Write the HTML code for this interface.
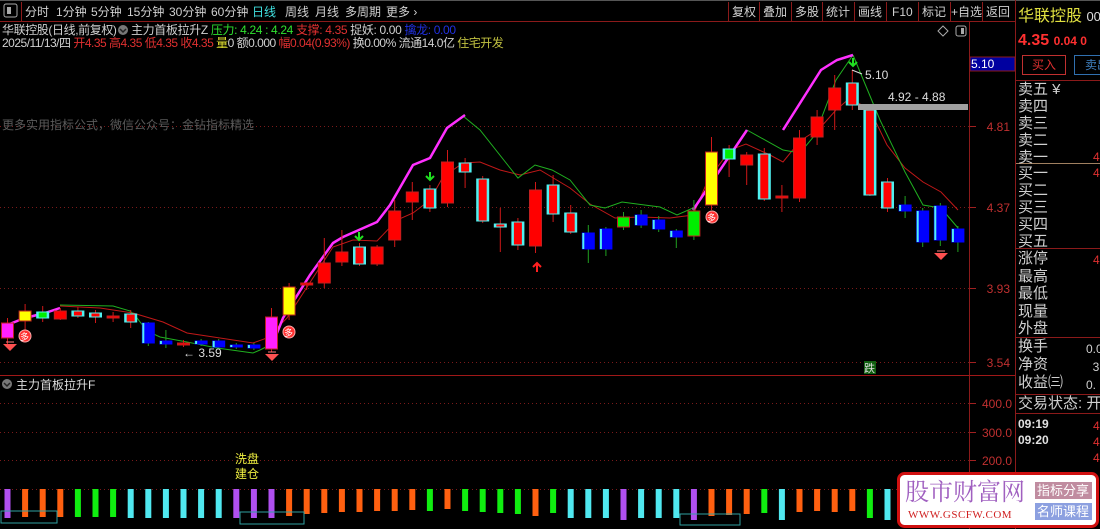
<!DOCTYPE html>
<html><head><meta charset="utf-8">
<style>
body{margin:0;background:#000;width:1100px;height:529px;overflow:hidden;font-family:"Liberation Sans","Noto Sans CJK SC",sans-serif;}
#root{position:relative;width:1100px;height:529px;overflow:hidden;background:#000;}
.t{position:absolute;white-space:nowrap;font-size:12px;line-height:14px;}
</style></head><body><div id="root">
<svg id="s" width="1100" height="529" style="position:absolute;left:0;top:0" xmlns="http://www.w3.org/2000/svg" font-family="Liberation Sans, Noto Sans CJK SC, sans-serif">
<rect x="0" y="0" width="1100" height="21" fill="#000"/>
<line x1="0" y1="21.5" x2="1015" y2="21.5" stroke="#8b1a1a"/>
<line x1="0" y1="0.5" x2="1100" y2="0.5" stroke="#555"/>
<rect x="4" y="4" width="13" height="13" fill="none" stroke="#aaa" rx="2"/><rect x="7" y="7" width="4" height="7" fill="#aaa"/>
<line x1="21.5" y1="2" x2="21.5" y2="21" stroke="#8b1a1a"/>
<g font-size="12" fill="#d0d0d0">
<text x="25" y="16">分时</text><text x="56" y="16">1分钟</text><text x="91" y="16">5分钟</text><text x="127" y="16">15分钟</text><text x="169" y="16">30分钟</text><text x="211" y="16">60分钟</text><text x="252" y="16" fill="#40e0e0">日线</text><text x="285" y="16">周线</text><text x="315" y="16">月线</text><text x="345" y="16">多周期</text><text x="386" y="16">更多 ›</text>
<text x="732" y="16">复权</text><text x="763" y="16">叠加</text><text x="795" y="16">多股</text><text x="826" y="16">统计</text><text x="858" y="16">画线</text><text x="892" y="16">F10</text><text x="922" y="16">标记</text><text x="951" y="16">+自选</text><text x="986" y="16">返回</text>
</g>
<g stroke="#8b1a1a"><line x1="728.5" y1="2" x2="728.5" y2="21"/><line x1="759.5" y1="2" x2="759.5" y2="21"/><line x1="791.5" y1="2" x2="791.5" y2="21"/><line x1="822.5" y1="2" x2="822.5" y2="21"/><line x1="854.5" y1="2" x2="854.5" y2="21"/><line x1="886.5" y1="2" x2="886.5" y2="21"/><line x1="918.5" y1="2" x2="918.5" y2="21"/><line x1="950.5" y1="2" x2="950.5" y2="21"/><line x1="982.5" y1="2" x2="982.5" y2="21"/></g>
<line x1="969.5" y1="22" x2="969.5" y2="529" stroke="#8b1a1a"/>
<line x1="1015.5" y1="0" x2="1015.5" y2="529" stroke="#8b1a1a"/>
<line x1="0" y1="375.5" x2="1015" y2="375.5" stroke="#a01818"/>
<g stroke="#7a1a1a" stroke-dasharray="1,3">
<line x1="0" y1="126.5" x2="969" y2="126.5"/><line x1="0" y1="207.5" x2="969" y2="207.5"/><line x1="0" y1="288.5" x2="969" y2="288.5"/><line x1="0" y1="362.5" x2="969" y2="362.5"/>
<line x1="0" y1="403.5" x2="969" y2="403.5"/><line x1="0" y1="432.5" x2="969" y2="432.5"/><line x1="0" y1="460.5" x2="969" y2="460.5"/><line x1="0" y1="489.5" x2="969" y2="489.5"/>
</g>
<g stroke="#a02020"><line x1="970" y1="126.5" x2="976" y2="126.5"/><line x1="970" y1="207.5" x2="976" y2="207.5"/><line x1="970" y1="288.5" x2="976" y2="288.5"/><line x1="970" y1="362.5" x2="976" y2="362.5"/><line x1="970" y1="403.5" x2="976" y2="403.5"/><line x1="970" y1="432.5" x2="976" y2="432.5"/><line x1="970" y1="460.5" x2="976" y2="460.5"/></g>
<g font-size="12" fill="#c03030" text-anchor="end"><text x="1010" y="131">4.81</text><text x="1010" y="212">4.37</text><text x="1010" y="293">3.93</text><text x="1010" y="367">3.54</text><text x="1012" y="408">400.0</text><text x="1012" y="437">300.0</text><text x="1012" y="465">200.0</text></g>
<rect x="970" y="57" width="45" height="14" fill="#0000a0" stroke="#8b1a1a"/><text x="971" y="68" font-size="12" fill="#fff">5.10</text>
<path d="M943 26 L948 31 L943 36 L938 31 Z" fill="none" stroke="#aaa"/>
<rect x="956" y="26" width="10" height="10" rx="2" fill="none" stroke="#aaa"/><rect x="961" y="28" width="3" height="6" fill="#aaa"/>
<circle cx="123" cy="30" r="5" fill="#777"/><path d="M120 29 L123 32 L126 29" stroke="#222" fill="none" stroke-width="1.5"/>
<circle cx="7" cy="384" r="5" fill="#777"/><path d="M4 383 L7 386 L10 383" stroke="#222" fill="none" stroke-width="1.5"/>
<text x="2" y="129" font-size="12" fill="#5a5a5a">更多实用指标公式，微信公众号：金钻指标精选</text>
<g id="chart"></g>
<rect x="858" y="104" width="110" height="6" fill="#a0a0a0"/>
<text x="888" y="101" font-size="12" fill="#ddd">4.92 - 4.88</text>
<text x="865" y="79" font-size="12" fill="#ddd">5.10</text><path d="M852 70 L862 74" stroke="#ddd"/>
<text x="183" y="357" font-size="12" fill="#ddd">← 3.59</text>
<rect x="864" y="361" width="12" height="13" fill="#106010"/><text x="864" y="372" font-size="11" fill="#ddd">跌</text>
<text x="16" y="389" font-size="12" fill="#ddd">主力首板拉升F</text>
<text x="235" y="463" font-size="12" fill="#f0f040">洗盘</text><text x="235" y="478" font-size="12" fill="#f0f040">建仓</text>
<g id="bars"></g>
<rect x="1" y="511" width="56" height="12" fill="none" stroke="#30a0a0"/>
<rect x="240" y="512" width="64" height="12" fill="none" stroke="#30a0a0"/>
<rect x="680" y="514" width="60" height="11" fill="none" stroke="#30a0a0"/>
<rect x="898.5" y="473.5" width="199" height="53" rx="6" fill="#fff" stroke="#d01010" stroke-width="3"/>
<text x="905" y="500" font-size="24" fill="#a060c0" font-family="Noto Serif CJK SC, serif">股市财富网</text>
<text x="908" y="518" font-size="11" fill="#d02020" font-family="Liberation Serif, serif" letter-spacing="0.5">WWW.GSCFW.COM</text>
<rect x="1035" y="482" width="57" height="17" fill="#c08ca0"/><text x="1037" y="495" font-size="13" fill="#fff">指标分享</text>
<rect x="1035" y="503" width="57" height="17" fill="#8ca0e0"/><text x="1037" y="516" font-size="13" fill="#fff">名师课程</text>
</svg>
<div class="t" style="left:2px;top:23px;color:#d0d0d0;letter-spacing:-0.4px">华联控股(日线,前复权)</div>
<div class="t" style="left:131px;top:23px;color:#d0d0d0;letter-spacing:-0.35px">主力首板拉升Z <span style="color:#30e030">压力: 4.24 : 4.24</span> <span style="color:#e03030">支撑: 4.35</span> 捉妖: 0.00 <span style="color:#2030e0">擒龙: 0.00</span></div>
<div class="t" style="left:2px;top:36px;color:#d0d0d0;letter-spacing:-0.5px">2025/11/13/四 <span style="color:#e03030">开4.35 高4.35 低4.35 收4.35</span> <span style="color:#e0e030">量</span>0 额0.000 <span style="color:#e03030">幅0.04(0.93%)</span> 换0.00% 流通14.0亿 <span style="color:#c0c040">住宅开发</span></div>
<div class="t" style="left:1018px;top:7px;font-size:16px;line-height:20px;color:#e0e040">华联控股 <span style="font-size:13px;color:#ddd">000</span></div>
<div class="t" style="left:1018px;top:31px;font-size:16px;line-height:20px;color:#ff3030;font-weight:bold">4.35 <span style="font-size:12px">0.04 0</span></div>
<div style="position:absolute;left:1022px;top:55px;width:42px;height:18px;border:1px solid #c03030;color:#e03030;font-size:12px;text-align:center;line-height:18px">买入</div>
<div style="position:absolute;left:1074px;top:55px;width:40px;height:18px;border:1px solid #3070b0;color:#4080c0;font-size:12px;line-height:18px;padding-left:10px">卖出</div>
<svg width="85" height="529" style="position:absolute;left:1016px;top:0">
<line x1="0" y1="80.5" x2="85" y2="80.5" stroke="#8b1a1a"/>
<line x1="0" y1="163.5" x2="85" y2="163.5" stroke="#a08060"/>
<line x1="0" y1="248.5" x2="85" y2="248.5" stroke="#8b1a1a"/>
<line x1="0" y1="337.5" x2="85" y2="337.5" stroke="#8b1a1a"/>
<line x1="0" y1="394.5" x2="85" y2="394.5" stroke="#8b1a1a"/>
<line x1="0" y1="413.5" x2="85" y2="413.5" stroke="#8b1a1a"/>
</svg>
<div class="t" style="left:1018px;top:81px;font-size:15px;line-height:17px;color:#d0d0d0">卖五 ¥<br>卖四<br>卖三<br>卖二<br>卖一</div>
<div class="t" style="left:1018px;top:165px;font-size:15px;line-height:17px;color:#d0d0d0">买一<br>买二<br>买三<br>买四<br>买五</div>
<div class="t" style="left:1018px;top:250px;font-size:15px;line-height:17.5px;color:#d0d0d0">涨停<br>最高<br>最低<br>现量<br>外盘</div>
<div class="t" style="left:1018px;top:338px;font-size:15px;line-height:18px;color:#d0d0d0">换手<br>净资<br>收益㈢</div>
<div class="t" style="left:1086px;top:340px;font-size:12px;line-height:18px;color:#d0d0d0">0.0<br>&nbsp;&nbsp;3<br>0.</div>
<div class="t" style="left:1018px;top:395px;font-size:15px;line-height:18px;color:#d0d0d0">交易状态: 开盘</div>
<div class="t" style="left:1018px;top:416px;font-size:12px;line-height:16px;color:#e0e0e0;font-weight:bold">09:19<br>09:20</div>
<div class="t" style="left:1093px;top:150px;font-size:12px;color:#e03030">4</div>
<div class="t" style="left:1093px;top:166px;font-size:12px;color:#e03030">4</div>
<div class="t" style="left:1093px;top:253px;font-size:12px;color:#e03030">4</div>
<div class="t" style="left:1093px;top:418px;font-size:12px;line-height:16px;color:#e03030">4<br>4<br>4</div>
</div>
<script>
var NS="http://www.w3.org/2000/svg";
function el(p,t,a){var e=document.createElementNS(NS,t);for(var k in a)e.setAttribute(k,a[k]);p.appendChild(e);return e;}
var ch=document.getElementById("chart");
function pl(pts,c,w){el(ch,"polyline",{points:pts,fill:"none",stroke:c,"stroke-width":w});}
pl("60,306 100,308 133,313 163,322 187,333 253,343 267,338 287,318 333,247 353,240 377,241 397,220 413,213 430,200 443,177 463,163 480,162 500,170 520,175 540,170 570,188 590,204 615,218 640,217 670,218 693,215 708,180 730,150 746,144 770,155 783,162 800,141 820,128 836,110 850,98 870,110 887,145 905,168 923,182 941,192 958,210","#c01818",1);
pl("60,305 113,306 130,311 137,318 147,331 160,337 187,342 217,348 253,353 260,350 270,345","#20b020",1);
pl("463,116 480,130 518,178 535,165 552,170 570,180 590,205 605,208 622,202 660,207 677,215 693,208","#20b020",1);
pl("747,130 783,150 800,153 815,135 836,80 853,55","#20b020",1);
pl("853,55 880,120 905,172 923,205 941,208 958,228","#20b020",1);
pl("7,325 25,318 45,313 60,308","#ff30ff",2.5);
pl("271,348 283,318 310,275 333,243 343,237 377,222 390,205 413,165 430,158 447,128 465,115","#ff30ff",2.5);
pl("693,210 747,130","#ff30ff",2.5);
pl("783,130 821,70 837,60 853,55","#ff30ff",2.5);
var C=[[0,323,338,318,345,"M"],[1,311,321,304,332,"Y"],[2,312,318,306,322,"GC"],[3,311,319,308,320,"R"],[4,311,316,307,318,"CR"],[5,313,317,310,323,"CR"],[6,316,318,312,322,"R"],[7,314,322,310,328,"CR"],[8,323,343,322,346,"B"],[9,341,344,330,348,"B"],[10,343,345,340,347,"R"],[11,341,344,339,346,"B"],[12,341,347,339,349,"B"],[13,345,347,343,349,"B"],[14,345,348,343,350,"B"],[15,317,349,308,352,"M"],[16,287,315,283,320,"Y"],[17,283,285,282,290,"R"],[18,263,283,238,288,"R"],[19,252,262,230,266,"R"],[20,247,264,243,266,"CR"],[21,247,264,245,266,"R"],[22,211,240,200,247,"R"],[23,192,202,182,220,"R"],[24,189,208,185,212,"CR"],[25,162,203,150,207,"R"],[26,163,172,158,188,"CR"],[27,179,221,176,223,"CR"],[28,224,227,208,252,"CR"],[29,222,245,218,250,"CR"],[30,190,246,182,253,"R"],[31,185,214,175,222,"CR"],[32,213,232,205,234,"CR"],[33,233,249,225,263,"B"],[34,229,249,227,256,"B"],[35,217,227,212,230,"G"],[36,215,225,210,228,"B"],[37,220,229,216,232,"B"],[38,231,237,229,248,"B"],[39,211,236,200,240,"G"],[40,152,205,137,210,"Y"],[41,149,159,145,177,"GC"],[42,155,165,152,185,"R"],[43,154,199,148,201,"CR"],[44,196,198,185,212,"R"],[45,138,198,130,202,"R"],[46,117,137,110,145,"R"],[47,88,110,75,130,"R"],[48,83,105,70,110,"CR"],[49,110,195,106,196,"CR"],[50,182,208,178,212,"CR"],[51,205,211,196,218,"B"],[52,211,242,208,247,"B"],[53,206,240,203,246,"B"],[54,229,242,226,252,"B"]];
C.forEach(function(c){var x=7.5+17.6*c[0];var t=c[5];
 var wc=(t=="B"||t=="G")?"#20a020":"#d01818";
 el(ch,"line",{x1:x,y1:c[3],x2:x,y2:c[4],stroke:wc});
 var h=Math.max(2,c[2]-c[1]);
 var fill={M:"#ff20ff",Y:"#ffff00",R:"#ff0000",CR:"#ff0000",B:"#0000ff",G:"#00ee00",GC:"#00ee00"}[t];
 var st=(t=="CR"||t=="GC")?"#50f0f0":(t=="B"?"#0000ff":"#c02020");
 el(ch,"rect",{x:x-6,y:c[1],width:12,height:h,fill:fill,stroke:st,"stroke-width":1});
 if(t=="CR"||t=="GC"||t=="B"){el(ch,"rect",{x:x-6,y:c[1],width:2,height:h,fill:"#50f0f0"});if(t!="B")el(ch,"rect",{x:x+4,y:c[1],width:2,height:h,fill:"#50f0f0"});}
});
[[359,240],[430,180],[853,66]].forEach(function(a){el(ch,"path",{d:"M"+a[0]+" "+(a[1]-8)+" V"+a[1]+" M"+(a[0]-4)+" "+(a[1]-4)+" L"+a[0]+" "+a[1]+" L"+(a[0]+4)+" "+(a[1]-4),stroke:"#20e020",fill:"none","stroke-width":2});});
el(ch,"path",{d:"M537 272 V264 M533 267 L537 263 L541 267",stroke:"#ff2020",fill:"none","stroke-width":2});
[[25,336],[289,332],[712,217]].forEach(function(a){el(ch,"circle",{cx:a[0],cy:a[1],r:6,fill:"#ff3030",stroke:"#ffaaaa"});var t=el(ch,"text",{x:a[0]-5,y:a[1]+4,"font-size":"9",fill:"#fff"});t.textContent="多";});
[[10,347],[272,357],[941,256]].forEach(function(a){el(ch,"path",{d:"M"+(a[0]-7)+" "+(a[1]-3)+" L"+(a[0]+7)+" "+(a[1]-3)+" L"+a[0]+" "+(a[1]+4)+" Z",fill:"#ff5050"});el(ch,"path",{d:"M"+(a[0]-4)+" "+(a[1]-5)+" L"+(a[0]+4)+" "+(a[1]-5),stroke:"#ff8080"});});
var P="#b050f0",O="#ff6010",G="#10ee10",Cy="#50e8f0";
var cols=[P,O,O,O,G,G,G,Cy,Cy,Cy,Cy,Cy,Cy,P,P,P,O,O,O,O,O,O,O,O,G,O,G,G,G,G,O,G,Cy,Cy,Cy,P,Cy,Cy,Cy,P,O,O,O,G,Cy,O,O,O,O,G,Cy,Cy,Cy,Cy,Cy];
var bot=[518,517,517,517,517,517,517,518,518,518,518,518,518,518,518,518,516,514,513,512,512,511,511,510,511,509,511,512,513,514,516,513,518,518,518,520,518,518,518,520,516,515,514,513,520,512,511,512,511,518,520,520,520,520,520];
var bg=document.getElementById("bars");
cols.forEach(function(c,i){var x=7.5+17.6*i;el(bg,"rect",{x:x-3,y:489,width:6,height:bot[i]-489,fill:c});});
</script>
</body></html>
